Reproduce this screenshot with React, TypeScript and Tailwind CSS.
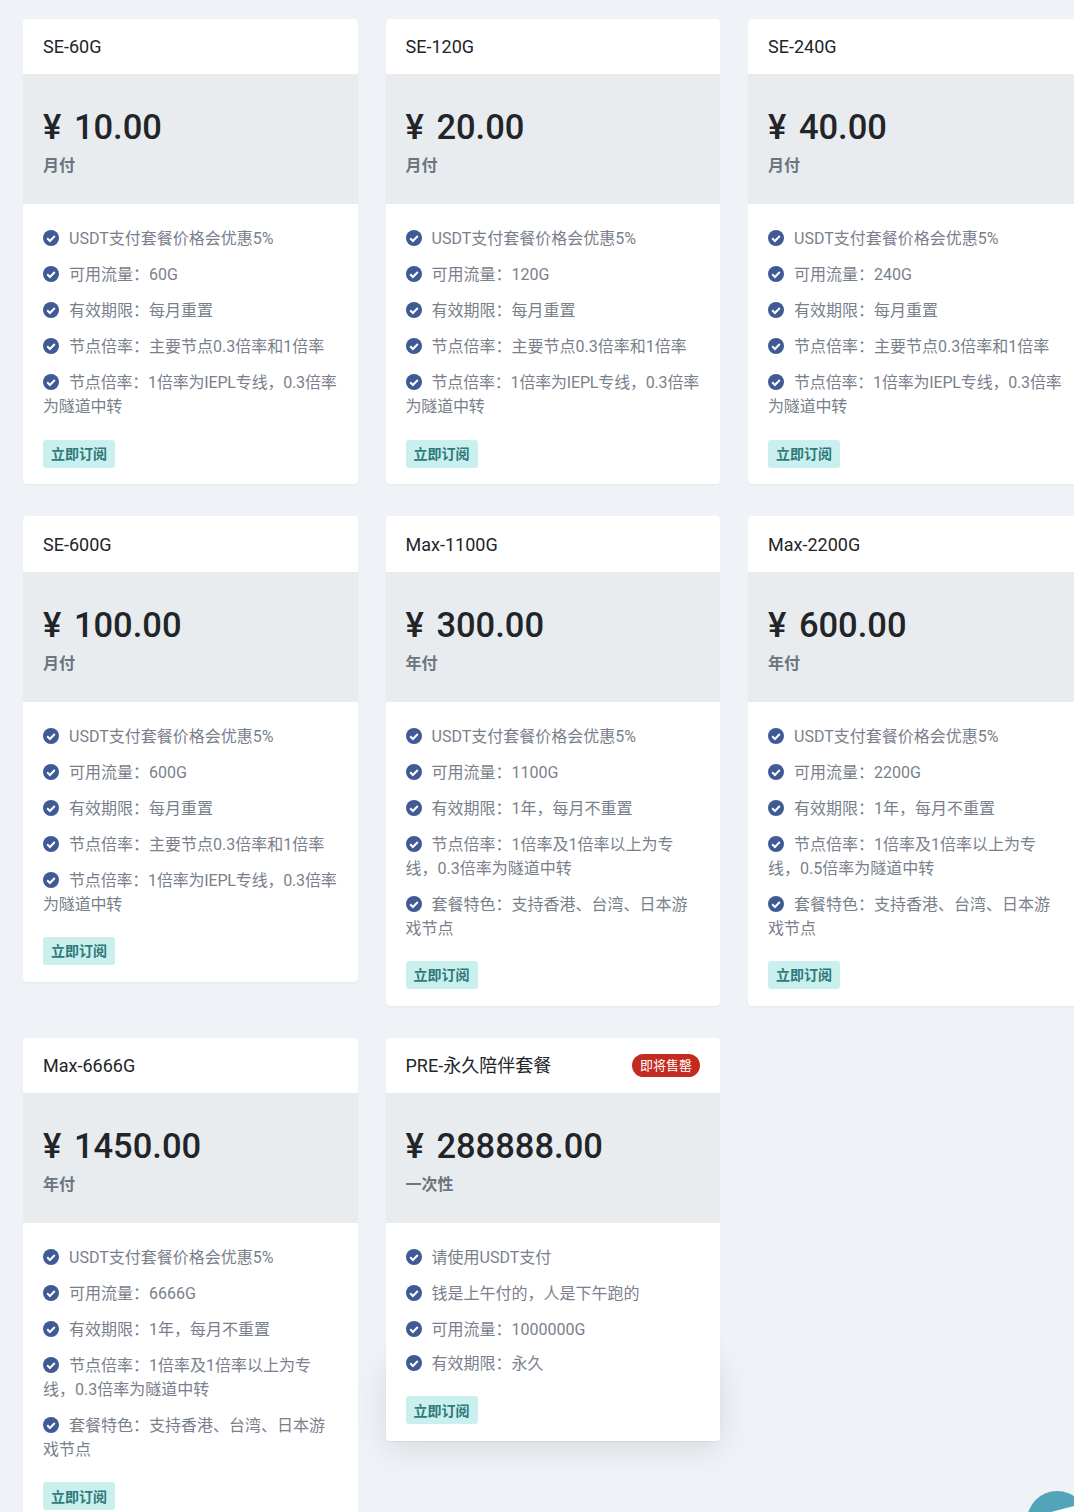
import React from 'react';

type Plan = {
  name: string;
  price: string;
  period: string;
  features: string[];
  badge?: string;
  hovered?: boolean;
};

const usdt = 'USDT支付套餐价格会优惠5%';
const se = (traffic: string) => [
  usdt,
  `可用流量：${traffic}`,
  '有效期限：每月重置',
  '节点倍率：主要节点0.3倍率和1倍率',
  '节点倍率：1倍率为IEPL专线，0.3倍率为隧道中转',
];
const max = (traffic: string, rate: string) => [
  usdt,
  `可用流量：${traffic}`,
  '有效期限：1年，每月不重置',
  `节点倍率：1倍率及1倍率以上为专线，${rate}倍率为隧道中转`,
  '套餐特色：支持香港、台湾、日本游戏节点',
];

const plans: Plan[] = [
  { name: 'SE-60G', price: '10.00', period: '月付', features: se('60G') },
  { name: 'SE-120G', price: '20.00', period: '月付', features: se('120G') },
  { name: 'SE-240G', price: '40.00', period: '月付', features: se('240G') },
  { name: 'SE-600G', price: '100.00', period: '月付', features: se('600G') },
  { name: 'Max-1100G', price: '300.00', period: '年付', features: max('1100G', '0.3') },
  { name: 'Max-2200G', price: '600.00', period: '年付', features: max('2200G', '0.5') },
  { name: 'Max-6666G', price: '1450.00', period: '年付', features: max('6666G', '0.3') },
  {
    name: 'PRE-永久陪伴套餐',
    price: '288888.00',
    period: '一次性',
    badge: '即将售罄',
    hovered: true,
    features: ['请使用USDT支付', '钱是上午付的，人是下午跑的', '可用流量：1000000G', '有效期限：永久'],
  },
];

const CheckIcon = () => (
  <svg viewBox="0 0 16 16" className="inline-block w-4 h-4 mr-[10px] align-[-2px]">
    <circle cx="8" cy="8" r="8" fill="#3f5a94" />
    <path d="M4.2 8.3 6.9 11l4.9-5" fill="none" stroke="#fff" strokeWidth="2" />
  </svg>
);

const PlanCard = ({ plan }: { plan: Plan }) => (
  <div className="relative bg-white rounded-[4px] shadow-[0_1px_2px_rgba(0,0,0,0.05)]">
    {plan.hovered && (
      <div className="absolute left-0 right-0 top-[318px] bottom-0 -z-10 shadow-[0_8px_32px_rgba(0,0,0,0.1)]" />
    )}
    <div className="h-[55.4px] px-5 flex items-center justify-between text-[18px] text-[#212529]">
      <span>{plan.name}</span>
      {plan.badge && (
        <span className="h-[23px] px-2 flex items-center rounded-full bg-[#c42b1f] text-white text-[13px]">
          {plan.badge}
        </span>
      )}
    </div>
    <div className="h-[130px] px-5 pt-[29px] bg-[#e9ecef]">
      <div className="text-[34.5px] leading-[48px] font-medium text-[#212529]">
        <span className="mr-[4px]">¥</span> {plan.price}
      </div>
      <div className="mt-[3px] text-[16px] leading-[24px] font-semibold text-[#6c757d]">{plan.period}</div>
    </div>
    <div className={`px-5 pt-[23px] ${plan.hovered ? 'pb-[17px]' : 'pb-[16.8px]'}`}>
      {plan.features.map((feature, i) => (
        <div
          key={feature}
          className={`text-[16px] leading-[24px] text-[#7a7f8c] ${plan.hovered && i === 2 ? 'mb-[10px]' : 'mb-3'} ${
            feature.includes('IEPL') ? 'tracking-[-0.18px]' : ''
          }`}
        >
          <CheckIcon />
          {feature}
        </div>
      ))}
      <button
        className={`block h-7 w-[72px] pt-[2px] rounded-[3px] bg-[#c9f0ef] text-[14px] font-bold text-[#2f7a78] ${
          plan.hovered ? 'mt-[20px]' : 'mt-[20.2px]'
        }`}
      >
        立即订阅
      </button>
    </div>
  </div>
);

export default function App() {
  return (
    <div
      className="relative isolate h-[1512px] overflow-hidden bg-[#eff2f7] [text-spacing-trim:space-all]"
      style={{ fontFamily: 'Roboto, "Noto Sans CJK SC", sans-serif' }}
    >
      <div className="w-[1082.5px] pl-[23px] pt-[19px] grid grid-cols-3 gap-x-[28px] gap-y-[32px] items-start">
        {plans.map((plan) => (
          <PlanCard key={plan.name} plan={plan} />
        ))}
      </div>
      <div className="absolute left-[1027px] top-[1491px] w-[60px] h-[60px] rounded-full overflow-hidden bg-[#52a4b8]">
        <svg viewBox="0 0 60 60" className="w-full h-full">
          <path d="M24 21 47 15V30H24Z" fill="#fff" />
        </svg>
      </div>
    </div>
  );
}
